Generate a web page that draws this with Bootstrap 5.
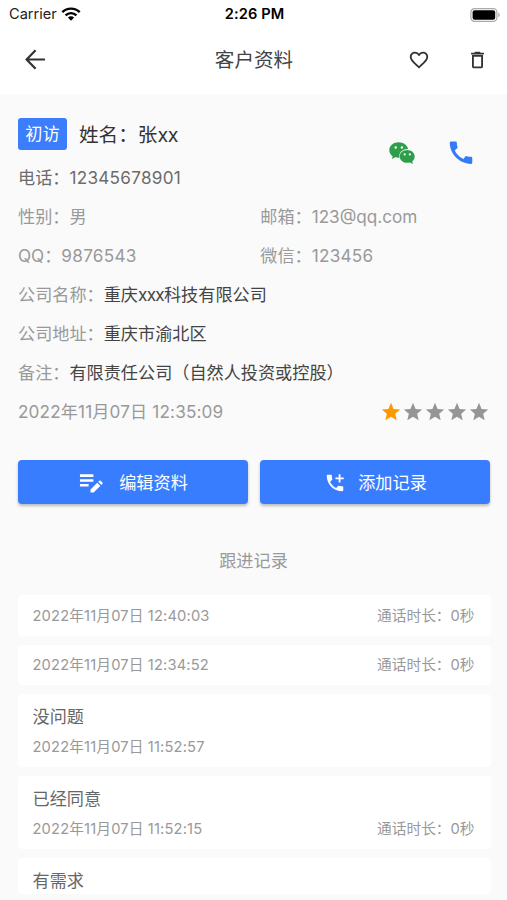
<!DOCTYPE html>
<html lang="zh-CN">
<head>
<meta charset="utf-8">
<meta name="viewport" content="width=device-width, initial-scale=1">
<title>客户资料</title>
<link rel="stylesheet" href="https://cdn.jsdelivr.net/npm/bootstrap@5.3.0/dist/css/bootstrap.min.css">
<style>
body{font-family:Inter,"Noto Sans CJK SC",sans-serif;font-size:17.15px;background:#fafafa;color:#999;height:900px;overflow:hidden}
svg{display:block;flex:none}
.status-bar{height:28px;padding:1px 7px 0 9px;font-size:14.6px;color:#222}
.clock{font-size:14.6px;font-weight:600;color:#000;letter-spacing:.1px}
.app-bar{height:66px;padding:0 18px 3px 23px;color:#333}
.app-title{font-size:19.6px;color:#444;padding-top:3px}
.side{flex:1 1 0}
.profile{padding:20px 18px 0 18px}
.info-row{height:39px}
.name-row{height:40px;margin-bottom:4px}
.tag{width:49px;height:32px;border-radius:3px;background:#3b7dfb;color:#fff}
.name{font-size:19.6px;color:#333;padding-top:3px}
.name .latin{letter-spacing:-.4px}
.c-dark{color:#444}
.c-dark .latin{letter-spacing:-.7px}
.c-mid{color:#6c6c6c}
.num{letter-spacing:.27px}
.date{letter-spacing:.15px}
.second-col{padding-left:13.500px}
.contact{padding:25px 13px 0 0;gap:30px}
.stars{margin-right:-1px}
.actions{padding:29px 17px 0 18px;gap:12px}
.btn-act{flex:1 1 0;height:44px;border:0;border-radius:4px;background:#397dff;color:#fff;font-size:17.15px;box-shadow:0 2px 3px rgba(0,0,0,.25);padding:1px 0 0 1px}
.btn-act:hover{background:#397dff;color:#fff}
.section-title{padding-top:44px;height:91px;line-height:26px}
.records{padding:0 16px 0 18px}
.record{background:#fff;border-radius:4px;padding:1px 16.5px 0 14.5px;font-size:14.7px;color:#999;height:41px;margin-bottom:9px}
.record-brief{height:40.500px}
.record-note{height:73px;padding-top:8px}
.record-cut{height:36px}
.note{font-size:17.15px;color:#666;height:30px}
.meta{height:30px}
</style>
<script src="https://cdn.jsdelivr.net/npm/bootstrap@5.3.0/dist/js/bootstrap.bundle.min.js"></script>
</head>
<body>
<header class="bg-white">
  <div class="status-bar d-flex align-items-center">
    <div class="side d-flex align-items-center"><span>Carrier</span>
      <svg class="ms-1" width="20" height="14" viewBox="0 0 20 14"><g fill="none" stroke="#000" stroke-width="2.4"><path d="M1.300 5.200a12.300 12.300 0 0 1 17.400 0"/><path d="M4.600 8.300a7.700 7.700 0 0 1 10.800 0"/></g><path d="M10 13.800 6.900 10.600a4.400 4.400 0 0 1 6.200 0z"/></svg>
    </div>
    <span class="clock">2:26 PM</span>
    <div class="side d-flex justify-content-end">
      <svg width="30" height="14" viewBox="0 0 30 14"><rect x=".9" y=".7" width="26" height="12.600" rx="3.600" fill="#fff" stroke="#aaa" stroke-width="1.200"/><rect x="2.600" y="2.300" width="22.600" height="9.400" rx="2"/><path d="M28.300 4.800c1.900.7 1.900 3.700 0 4.400z" fill="#aaa"/></svg>
    </div>
  </div>
  <nav class="app-bar d-flex align-items-center">
    <div class="side"><svg width="25" height="25" viewBox="0 0 25 25" fill="none" stroke="#333" stroke-width="2.200"><path d="M22 12.500H4M12.600 3.200 3.600 12.500l9 9.300"/></svg></div>
    <span class="app-title me-1">客户资料</span>
    <div class="side d-flex justify-content-end align-items-center">
      <svg class="me-3" width="22" height="22" viewBox="0 0 24 24" fill="#333"><path d="M16.500 3c-1.740 0-3.410.81-4.500 2.090C10.910 3.810 9.240 3 7.500 3 4.420 3 2 5.420 2 8.500c0 3.780 3.400 6.860 8.550 11.540L12 21.350l1.450-1.320C18.600 15.360 22 12.280 22 8.500 22 5.420 19.580 3 16.500 3zm-4.400 15.550-.1.100-.1-.1C7.140 14.240 4 11.390 4 8.500 4 6.500 5.500 5 7.500 5c1.540 0 3.040.99 3.570 2.360h1.870C13.460 5.990 14.960 5 16.500 5c2 0 3.500 1.500 3.500 3.500 0 2.890-3.140 5.740-7.900 10.050z"/></svg>
      <svg class="ms-1 ps-3" width="39" height="22" viewBox="0 0 24 24" fill="#333"><path d="M6 19c0 1.100.9 2 2 2h8c1.100 0 2-.9 2-2V6.500H6V19zM8 8.500h8V19H8V8.500zM15.500 4l-1-1h-5l-1 1H5v2h14V4z"/></svg>
    </div>
  </nav>
</header>
<main>
  <section class="profile">
    <div class="d-flex justify-content-between">
      <div>
        <div class="name-row d-flex align-items-center"><span class="tag d-flex align-items-center justify-content-center">初访</span><span class="name ms-2 ps-1">姓名：张<span class="latin">xx</span></span></div>
        <div class="info-row d-flex align-items-center c-mid"><span>电话：<span class="num">12345678901</span></span></div>
      </div>
      <div class="contact d-flex">
        <svg width="28" height="28" viewBox="0 0 28 28"><path fill="#2f9e4b" d="M10.700 3.300C5.500 3.300 1.300 6.800 1.300 11.200c0 2.500 1.300 4.600 3.400 6l-.9 2.900 3.500-1.800c1.100.3 2.200.5 3.300.5.400 0 .7 0 1-.1a6.500 6.500 0 0 1-.3-1.800c0-4 3.800-7 8.300-7h.5c-.9-3.800-4.800-6.600-9.400-6.600z"/><path fill="#2f9e4b" d="M26.700 17.400c0-3.600-3.500-6.400-7.500-6.400-4.300 0-7.500 2.900-7.500 6.400s3.200 6.400 7.500 6.400c.9 0 1.800-.2 2.600-.4l3.200 1.600-.8-2.600c1.500-1.200 2.500-2.900 2.500-5z"/><g fill="#fafafa"><circle cx="7.700" cy="8.500" r="1.200"/><circle cx="13.900" cy="8.500" r="1.200"/><circle cx="16.700" cy="15.400" r="1.100"/><circle cx="21.800" cy="15.400" r="1.100"/></g></svg>
        <svg width="30" height="30" viewBox="0 1.100 24 24" fill="#347cf5"><path d="M20.010 15.380c-1.230 0-2.420-.2-3.530-.56-.35-.12-.74-.03-1.010.24l-1.570 1.970c-2.830-1.350-5.480-3.900-6.890-6.830l1.950-1.660c.27-.28.35-.67.24-1.020-.37-1.110-.56-2.300-.56-3.530 0-.54-.45-.99-.99-.99H4.190C3.650 3 3 3.240 3 3.990 3 13.280 10.730 21 20.010 21c.71 0 .99-.63.99-1.180v-3.450c0-.54-.45-.99-.99-.99z"/></svg>
      </div>
    </div>
    <div class="row g-0 info-row align-items-center"><div class="col">性别：男</div><div class="col second-col pe-0">邮箱：123@qq.com</div></div>
    <div class="row g-0 info-row align-items-center"><div class="col">QQ：<span class="num">9876543</span></div><div class="col second-col">微信：<span class="num">123456</span></div></div>
    <div class="info-row d-flex align-items-center"><span>公司名称：</span><span class="c-dark">重庆<span class="latin">xxx</span>科技有限公司</span></div>
    <div class="info-row d-flex align-items-center"><span>公司地址：</span><span class="c-dark">重庆市渝北区</span></div>
    <div class="info-row d-flex align-items-center"><span>备注：</span><span class="c-dark">有限责任公司（自然人投资或控股）</span></div>
    <div class="info-row d-flex align-items-center justify-content-between"><span class="date">2022年11月07日 12:35:09</span>
      <div class="stars d-flex">
        <svg width="22" height="22" viewBox="0 0 24 24" fill="#ff9800"><path id="star" d="M12 17.270 18.180 21l-1.640-7.030L22 9.240l-7.190-.61L12 2 9.190 8.630 2 9.240l5.460 4.730L5.820 21z"/></svg>
        <svg width="22" height="22" viewBox="0 0 24 24" fill="#959595"><use href="#star"/></svg>
        <svg width="22" height="22" viewBox="0 0 24 24" fill="#959595"><use href="#star"/></svg>
        <svg width="22" height="22" viewBox="0 0 24 24" fill="#959595"><use href="#star"/></svg>
        <svg width="22" height="22" viewBox="0 0 24 24" fill="#959595"><use href="#star"/></svg>
      </div>
    </div>
  </section>
  <div class="actions d-flex">
    <button class="btn btn-act d-flex align-items-center justify-content-center"><svg class="me-3" width="24" height="24" viewBox="0 0 25 24" fill="#fff"><path d="M1 3h14v2.700H1zM1 8h14v2.700H1zM1 13h9v2.700H1zM12 18.800l7-7 3.200 3.200-7 7H12zM20 10.800l1.200-1.200q.7-.6 1.400 0l1.800 1.800q.6.700 0 1.400L23.200 14z"/></svg>编辑资料</button>
    <button class="btn btn-act d-flex align-items-center justify-content-center"><svg class="me-2 pe-1" width="26" height="22" viewBox="0 0 24 24" fill="#fff"><path d="M20 15.500c-1.250 0-2.450-.2-3.570-.57-.35-.11-.74-.03-1.020.24l-2.200 2.200c-2.830-1.440-5.150-3.750-6.590-6.590l2.200-2.200c.28-.28.36-.67.25-1.020C8.700 6.450 8.500 5.250 8.500 4c0-.55-.45-1-1-1H4c-.55 0-1 .45-1 1 0 9.390 7.610 17 17 17 .55 0 1-.45 1-1v-3.500c0-.55-.45-1-1-1zM21.500 6H18V2.500h-2V6h-3.500v2H16v3.500h2V8h3.500z"/></svg>添加记录</button>
  </div>
  <div class="section-title text-center">跟进记录</div>
  <section class="records">
    <div class="record record-brief d-flex align-items-center justify-content-between"><span class="date">2022年11月07日 12:40:03</span><span>通话时长：0秒</span></div>
    <div class="record record-brief d-flex align-items-center justify-content-between"><span class="date">2022年11月07日 12:34:52</span><span>通话时长：0秒</span></div>
    <div class="record record-note"><div class="note d-flex align-items-center">没问题</div><div class="meta d-flex align-items-center"><span class="date">2022年11月07日 11:52:57</span></div></div>
    <div class="record record-note"><div class="note d-flex align-items-center">已经同意</div><div class="meta d-flex align-items-center justify-content-between"><span class="date">2022年11月07日 11:52:15</span><span>通话时长：0秒</span></div></div>
    <div class="record record-note record-cut"><div class="note d-flex align-items-center">有需求</div></div>
  </section>
</main>
</body>
</html>
